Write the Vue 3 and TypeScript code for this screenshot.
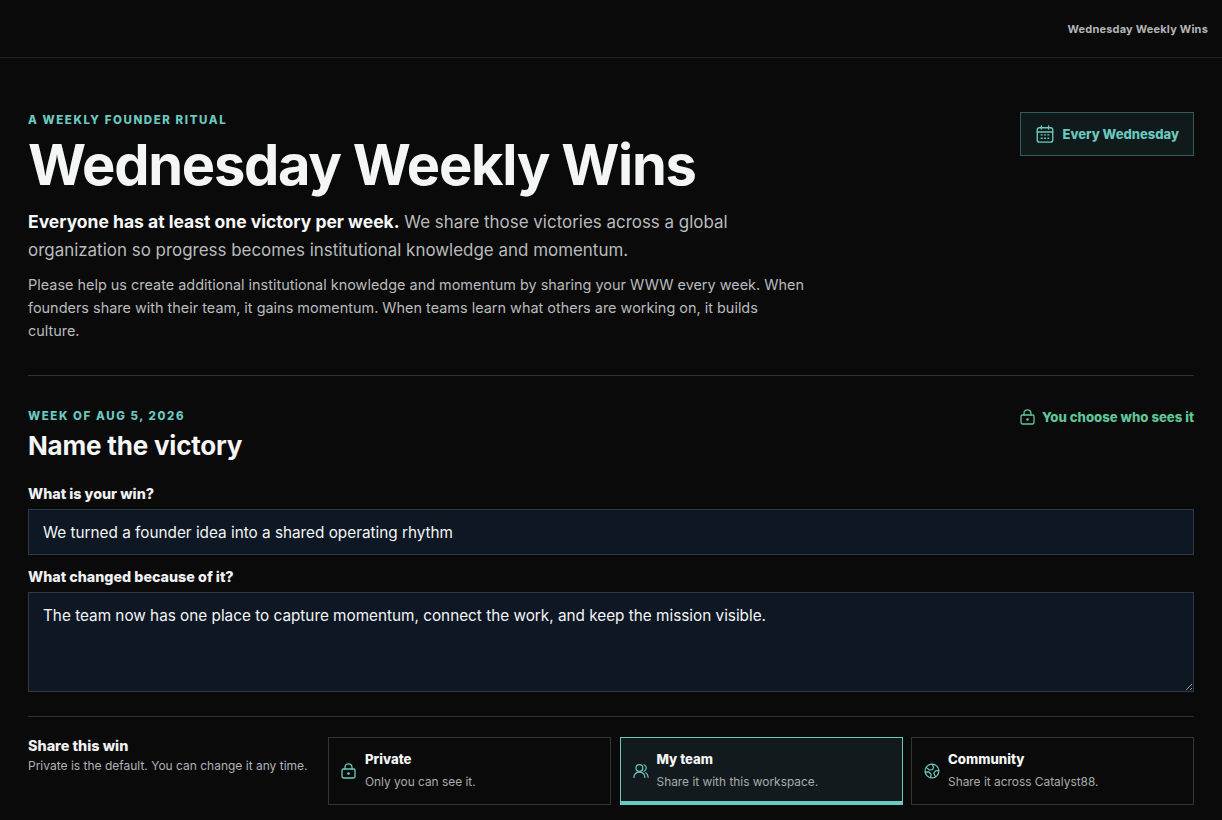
<script setup lang="ts">
interface Option { title: string; desc: string; icon: string; active?: boolean }
const options: Option[] = [
  { title: 'Private', desc: 'Only you can see it.', icon: 'lock' },
  { title: 'My team', desc: 'Share it with this workspace.', icon: 'team', active: true },
  { title: 'Community', desc: 'Share it across Catalyst88.', icon: 'globe' },
]
</script>

<template>
  <div class="page">
    <header class="topbar"><span>Wednesday Weekly Wins</span></header>
    <main class="main">
      <section class="hero">
        <div class="hero-head">
          <div>
            <p class="eyebrow">A WEEKLY FOUNDER RITUAL</p>
            <h1>Wednesday Weekly Wins</h1>
          </div>
          <div class="cadence">
            <svg width="18" height="18" viewBox="0 0 20 20" fill="none" stroke="currentColor" stroke-width="1.5" stroke-linecap="round" stroke-linejoin="round">
              <rect x="1.4" y="3" width="17.2" height="16" rx="2.4" />
              <path d="M1.4 7.8h17.2M6 1v3.4M14 1v3.4" />
              <path d="M5.8 11h1M9.5 11h1M13.2 11h1M5.8 14.8h1M9.5 14.8h1M13.2 14.8h1" stroke-width="1.6" />
            </svg>
            <span>Every Wednesday</span>
          </div>
        </div>
        <p class="lead"><strong>Everyone has at least one victory per week.</strong> We share those victories across a global organization so progress becomes institutional knowledge and momentum.</p>
        <p class="body">Please help us create additional institutional knowledge and momentum by sharing your WWW every week. When founders share with their team, it gains momentum. When teams learn what others are working on, it builds culture.</p>
      </section>

      <section class="form">
        <div class="form-head">
          <div>
            <p class="eyebrow">WEEK OF AUG 5, 2026</p>
            <h2>Name the victory</h2>
          </div>
          <div class="choose">
            <svg width="15" height="16" viewBox="0 0 15 16" fill="none" stroke="currentColor" stroke-width="1.3" stroke-linecap="round" stroke-linejoin="round">
              <rect x="1" y="6" width="13" height="9" rx="1.4" />
              <path d="M4 6V4.3a3.5 3.5 0 0 1 7 0V6" />
              <circle cx="7.5" cy="10.5" r=".7" fill="currentColor" />
            </svg>
            <span>You choose who sees it</span>
          </div>
        </div>
        <label class="field">
          <span>What is your win?</span>
          <input type="text" value="We turned a founder idea into a shared operating rhythm" />
        </label>
        <label class="field">
          <span>What changed because of it?</span>
          <textarea>The team now has one place to capture momentum, connect the work, and keep the mission visible.</textarea>
        </label>
      </section>

      <section class="share">
        <div class="share-copy">
          <h3>Share this win</h3>
          <p>Private is the default. You can change it any time.</p>
        </div>
        <div class="options">
          <div v-for="o in options" :key="o.title" class="option" :class="{ active: o.active }">
            <svg v-if="o.icon === 'lock'" width="16" height="16" viewBox="0 0 15 16" preserveAspectRatio="xMinYMid meet" fill="none" stroke="currentColor" stroke-width="1.3" stroke-linecap="round" stroke-linejoin="round">
              <rect x="1" y="6" width="13" height="9" rx="1.4" />
              <path d="M4 6V4.3a3.5 3.5 0 0 1 7 0V6" />
              <circle cx="7.5" cy="10.5" r=".7" fill="currentColor" />
            </svg>
            <svg v-else-if="o.icon === 'team'" width="16" height="16" viewBox="0 0 16 16" fill="none" stroke="currentColor" stroke-width="1.2" stroke-linecap="round" stroke-linejoin="round">
              <circle cx="6.4" cy="5" r="3.4" />
              <path d="M.9 14.4c.3-3.3 2.5-5.200 5.500-5.200s5.200 1.900 5.500 5.200" />
              <path d="M11 1.800a3.400 3.400 0 0 1 0 6.400M12.800 9.700c1.400.8 2.200 2.400 2.400 4.500" />
            </svg>
            <svg v-else width="16" height="16" viewBox="0 0 16 16" fill="none" stroke="currentColor" stroke-width="1.2" stroke-linecap="round" stroke-linejoin="round">
              <circle cx="8" cy="8" r="6.9" />
              <path d="M2.200 4.400 5.400 7l3.200-.4 1-2.400L8.200 1.200" />
              <path d="M1.200 9.200 4.600 8.800l2.600 2.400-.6 3.500" />
              <path d="M14.800 7.600 11.600 7.800 9.800 10.200l1.800 3.800" />
            </svg>
            <div class="option-text">
              <strong>{{ o.title }}</strong>
              <span>{{ o.desc }}</span>
            </div>
          </div>
        </div>
      </section>
    </main>
  </div>
</template>

<style>
html, body { background: #0a0a0b; }
</style>

<style scoped>
.page {
  min-height: 820px;
  background: #0a0a0b;
  color: #f4f5f5;
  font-family: Inter, "Noto Sans", sans-serif;
  overflow: hidden;
}
.topbar {
  height: 57px;
  border-bottom: 1px solid #222424;
  display: flex;
  align-items: center;
  justify-content: flex-end;
  padding: 0 14px;
  font-size: 11px;
  font-weight: 700;
  letter-spacing: .2px;
  color: #b4b6b6;
}
.main { padding: 54px 28px 0; }
.hero { padding-bottom: 33px; border-bottom: 1px solid #2e3231; }
.hero-head { display: flex; justify-content: space-between; align-items: flex-start; }
.eyebrow {
  margin: 0;
  padding-top: 1px;
  font-size: 11.5px;
  line-height: 15px;
  font-weight: 800;
  letter-spacing: 1.58px;
  color: #6bc9bf;
}
h1 {
  margin: 2px 0 0;
  font-size: 56px;
  line-height: 70px;
  font-weight: 700;
  letter-spacing: -1.26px;
  color: #f4f5f5;
}
.cadence {
  display: flex;
  align-items: center;
  gap: 8px;
  height: 44px;
  box-sizing: border-box;
  padding: 0 14px 0 15px;
  border: 1px solid #2f5e59;
  background: #101a1b;
  color: #6bc9bf;
  font-size: 13px;
  font-weight: 800;
}
.lead {
  margin: 8px 0 0;
  width: 780px;
  font-size: 16.95px;
  line-height: 28px;
  color: #b9bcbc;
}
.lead strong { color: #f7f8f8; font-size: 17.5px; font-weight: 700; }
.body {
  margin: 9px 0 0;
  width: 780px;
  font-size: 14.44px;
  line-height: 23px;
  color: #b9bcbc;
}
.form { padding-top: 32px; }
.form-head { display: flex; justify-content: space-between; align-items: flex-start; }
h2 {
  margin: 5px 0 0;
  font-size: 26px;
  line-height: 34px;
  font-weight: 700;
  letter-spacing: -.2px;
  color: #f4f5f5;
}
.choose {
  display: flex;
  align-items: center;
  gap: 7px;
  color: #5fc796;
  font-size: 13.2px;
  font-weight: 800;
  height: 17px;
}
.field { display: block; }
.field span {
  display: block;
  font-size: 14.3px;
  line-height: 18px;
  font-weight: 800;
  color: #f0f1f1;
  margin-bottom: 6px;
}
.form-head + .field { margin-top: 22px; }
.field + .field { margin-top: 13px; }
input, textarea {
  display: block;
  width: 100%;
  box-sizing: border-box;
  background: #0e1724;
  border: 1px solid #2f3a44;
  color: #f4f5f5;
  font-family: inherit;
  font-size: 15.3px;
  line-height: 23px;
  padding: 11px 14px;
  outline: none;
  border-radius: 0;
  margin: 0;
}
input { height: 46px; }
textarea { height: 100px; }
.share {
  margin-top: 24px;
  border-top: 1px solid #2e3231;
  padding-top: 20px;
  display: flex;
}
.share-copy { width: 300px; flex: none; }
h3 {
  margin: 0;
  font-size: 14.4px;
  line-height: 18px;
  font-weight: 800;
  color: #f0f1f1;
}
.share-copy p {
  margin: 2px 0 0;
  font-size: 12px;
  line-height: 18px;
  color: #b0b3b3;
}
.options {
  flex: 1;
  display: grid;
  grid-template-columns: repeat(3, 1fr);
  gap: 8.5px;
}
.option {
  height: 68px;
  box-sizing: border-box;
  border: 1px solid #323635;
  display: flex;
  align-items: center;
  gap: 8px;
  padding: 0 12px;
  color: #6bc9bf;
}
.option.active {
  border-color: #6bc9bf;
  box-shadow: inset 0 -3px 0 #6bc9bf;
  background: #121a1e;
}
.option svg { flex: none; }
.option-text { display: flex; flex-direction: column; padding-bottom: 2px; }
.option-text strong {
  font-size: 13.2px;
  line-height: 22px;
  font-weight: 800;
  color: #f4f5f5;
}
.option-text span {
  font-size: 11.9px;
  line-height: 23px;
  color: #a9acac;
}
</style>
